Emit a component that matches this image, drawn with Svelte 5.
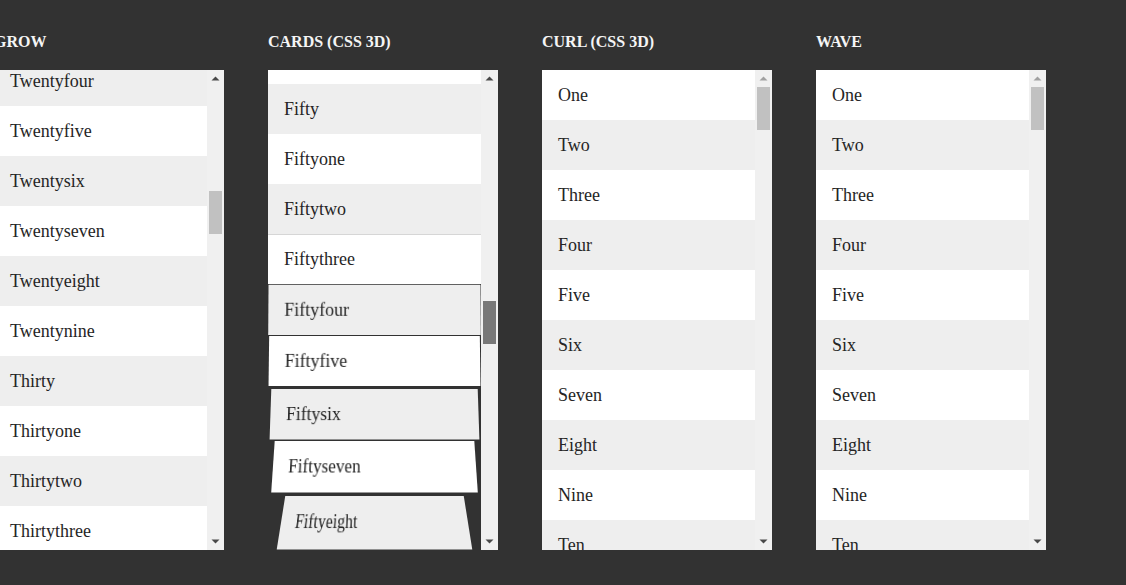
<script lang="ts">
	const ROW_HEIGHT = 50;
	const TRACK_HEIGHT = 446;

	type Tilt = { top: number; bottom: number; topScale: number; bottomScale: number };
	type Row = { label: string; even: boolean; tilt?: Tilt };

	// top and bottom are edge positions in row heights
	const tilts: Record<string, Tilt> = {
		Fiftythree: { top: 0.004, bottom: 1, topScale: 1, bottomScale: 1 },
		Fiftyfour: { top: 0.014, bottom: 1.02, topScale: 0.995, bottomScale: 0.998 },
		Fiftyfive: { top: 0.04, bottom: 1.04, topScale: 0.989, bottomScale: 0.995 },
		Fiftysix: { top: 0.1, bottom: 1.11, topScale: 0.969, bottomScale: 0.985 },
		Fiftyseven: { top: 0.14, bottom: 1.17, topScale: 0.937, bottomScale: 0.97 },
		Fiftyeight: { top: 0.24, bottom: 1.31, topScale: 0.838, bottomScale: 0.918 },
	};

	function rows(labels: string, first: number): Row[] {
		return labels.split(' ').map((label, i) => ({
			label,
			even: (first + i) % 2 === 0,
			tilt: tilts[label],
		}));
	}

	const basics = rows('One Two Three Four Five Six Seven Eight Nine Ten', 1);

	const demos = [
		{
			name: 'Grow',
			offset: -14,
			thumb: 104,
			active: false,
			rows: rows(
				'Twentyfour Twentyfive Twentysix Twentyseven Twentyeight Twentynine Thirty Thirtyone Thirtytwo Thirtythree',
				24
			),
		},
		{
			name: 'Cards (CSS 3D)',
			offset: -36,
			thumb: 214,
			active: true,
			rows: rows(
				'Fortynine Fifty Fiftyone Fiftytwo Fiftythree Fiftyfour Fiftyfive Fiftysix Fiftyseven Fiftyeight',
				49
			),
		},
		{ name: 'Curl (CSS 3D)', offset: 0, thumb: 0, active: false, rows: basics },
		{ name: 'Wave', offset: 0, thumb: 0, active: false, rows: basics },
	];

	// perspective matrix for a card that leans back around its top edge
	function lean(tilt?: Tilt) {
		if (!tilt) return undefined;
		const w = 1 / tilt.topScale;
		const dw = (1 / tilt.bottomScale - w) / ROW_HEIGHT;
		const y = (tilt.top * ROW_HEIGHT) / tilt.topScale;
		const dy = ((tilt.bottom * ROW_HEIGHT) / tilt.bottomScale - y) / ROW_HEIGHT;
		return `matrix3d(1, 0, 0, 0, 0, ${dy}, 0, ${dw}, 0, 0, 1, 0, 0, ${y}, 0, ${w})`;
	}
</script>

<main>
	{#each demos as demo}
		<section class="demo">
			<h2>{demo.name}</h2>
			<div class="scroller">
				<div class="viewport">
					<ul style:margin-top="{demo.offset}px">
						{#each demo.rows as row}
							<li class:even={row.even} style:transform={lean(row.tilt)}>{row.label}</li>
						{/each}
					</ul>
				</div>
				<div class="scrollbar">
					<button type="button" aria-label="Scroll {demo.name} up" disabled={demo.thumb === 0}>
						<svg width="9" height="5" viewBox="0 0 9 5"><path d="M0.5 4.5 4.5 0.5 8.5 4.5z" /></svg>
					</button>
					<div class="track">
						<div
							class="thumb"
							class:active={demo.active}
							style:margin-top="{demo.thumb}px"
							style:height="{Math.round((480 / 5000) * TRACK_HEIGHT)}px"
						></div>
					</div>
					<button type="button" aria-label="Scroll {demo.name} down">
						<svg width="9" height="5" viewBox="0 0 9 5"><path d="M0.5 0.5 4.5 4.5 8.5 0.5z" /></svg>
					</button>
				</div>
			</div>
		</section>
	{/each}
</main>

<style>
	:global(body) {
		background: #323232;
		overflow: hidden;
	}

	main {
		display: flex;
		gap: 44px;
		padding: 32px 0;
		margin-left: -6px;
		font-family: 'Liberation Serif', 'Times New Roman', serif;
	}

	.demo {
		flex: none;
		width: 230px;
	}

	h2 {
		margin: 0 0 18px;
		font-size: 16px;
		line-height: 20px;
		text-transform: uppercase;
		color: #f5f5f5;
	}

	.scroller {
		display: flex;
		height: 480px;
	}

	.viewport {
		flex: 1;
		overflow: hidden;
	}

	ul {
		margin: 0;
		padding: 0;
		list-style: none;
	}

	li {
		padding: 16px;
		font-size: 18px;
		line-height: 18px;
		color: #252525;
		background: #fff;
		transform-origin: 50% 0;
	}

	li.even {
		background: #eee;
	}

	/* --- Scrollbar --- */

	.scrollbar {
		display: flex;
		flex-direction: column;
		width: 17px;
		background: #f0f0f0;
	}

	.track {
		flex: 1;
		display: flow-root;
	}

	.thumb {
		margin: 0 2px;
		background: #c1c1c1;
	}

	.thumb.active {
		background: #787878;
	}

	button {
		display: flex;
		align-items: center;
		justify-content: center;
		height: 17px;
		padding: 0;
		border: 0;
		background: none;
		color: #484848;
	}

	button:disabled {
		color: #a0a0a0;
	}

	svg {
		fill: currentColor;
	}
</style>
